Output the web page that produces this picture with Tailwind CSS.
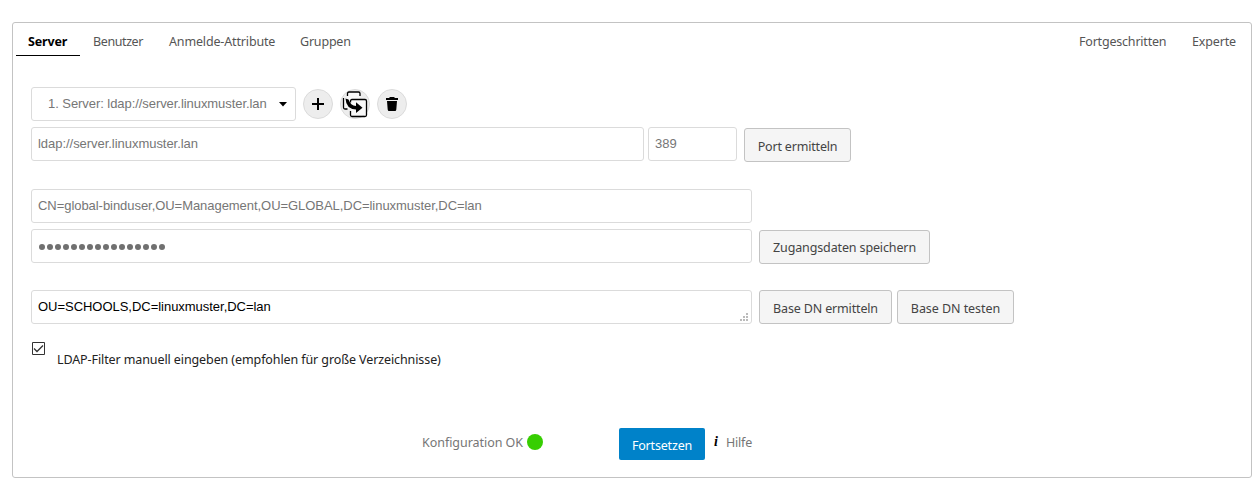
<!DOCTYPE html>
<html lang="de">
<head>
<meta charset="utf-8">
<title>LDAP</title>
<script src="https://cdn.jsdelivr.net/npm/@tailwindcss/browser@4"></script>
</head>
<body class="bg-white font-['Noto_Sans','Open_Sans',sans-serif] text-[12.5px] whitespace-nowrap">
<main class="ml-3 mt-[22px] h-[456px] w-[1240px] rounded-[3px] border border-[#c3c3c3]">
  <nav class="flex h-[33px] pl-[3px] leading-[37px] text-[#555]">
    <a class="w-16 border-b border-black pl-3 font-bold text-black tracking-[-0.15px]">Server</a>
    <a class="ml-[13px] w-[76px] tracking-[-0.4px]">Benutzer</a>
    <a class="w-[131px] tracking-[-0.15px]">Anmelde-Attribute</a>
    <a class="tracking-[-0.2px]">Gruppen</a>
    <a class="ml-auto w-[113px] tracking-[-0.2px]">Fortgeschritten</a>
    <a class="w-[59px] tracking-[-0.15px]">Experte</a>
  </nav>
  <section class="pl-[18px] pt-[31px] font-['Liberation_Sans',Arial,sans-serif] text-[13px] leading-[32px] text-[#767676]">
    <div class="flex h-[34px] items-center">
      <div class="flex h-[34px] w-[265px] items-center rounded-[3px] border border-[#dbdbdb] pl-4">
        <span class="w-[235px] tracking-[-0.06px]">1. Server: ldap://server.linuxmuster.lan</span>
        <svg class="-ml-[4px]" width="8" height="5" viewBox="0 0 8 5"><path d="M0 0h8L4 4.5z" fill="#000"/></svg>
      </div>
      <button class="ml-[7px] flex size-[30px] items-center justify-center rounded-full border border-[#dbdbdb] bg-[#ededed]"><svg width="12" height="12" viewBox="0 0 12 12"><path d="M6 0v12M0 6h12" stroke="#000" stroke-width="2"/></svg></button>
      <button class="ml-[7px] flex size-[30px] items-center justify-center rounded-full border border-[#dbdbdb] bg-[#ededed]">
        <svg class="shrink-0" width="26" height="28" viewBox="0 0 26 28">
          <path d="M1 8h4V2h13v7h6.500v16H9v-6H1z" fill="#f8f8f8"/>
          <path d="M5.500 6V3.500Q5.500 2 7 2h9.500Q18 2 18 3.500V6M1.500 8v9.500q0 1.500 1.500 1.500h2.500" fill="none" stroke="#000" stroke-width="1.300"/>
          <path d="M8.500 21v4q0 1.500 1.500 1.500h13q1.500 0 1.500-1.500V11q0-1.500-1.500-1.500H10q-1.500 0-1.500 1.500v1.500" fill="none" stroke="#000" stroke-width="1.300"/>
          <path d="M3.500 8.500Q4 19 14 19.500V23l6.500-5.300L14 12.300V16Q8.500 15.500 6.500 9.500z" fill="#000"/>
        </svg>
      </button>
      <button class="ml-[7px] flex size-[30px] items-center justify-center rounded-full border border-[#dbdbdb] bg-[#ededed]"><svg width="12" height="14" viewBox="0 0 12 14"><path d="M4 0h4l1 1h3v2H0V1h3zM1 4h10l-.7 8.500Q10.200 14 9 14H3q-1.200 0-1.300-1.500z" fill="#000"/></svg></button>
    </div>
    <div class="mt-[6px] flex h-[34px]">
      <div class="w-[613px] rounded-[3px] border border-[#dbdbdb] pl-[6px] tracking-[-0.04px]">ldap://server.linuxmuster.lan</div>
      <div class="ml-1 w-[89px] rounded-[3px] border border-[#dbdbdb] pl-[6px]">389</div>
      <button class="ml-[7px] mt-px h-[34px] w-[107px] rounded-[3px] border border-[#c3c3c3] bg-[#f5f5f5] pt-[2px] font-['Noto_Sans',sans-serif] text-[12.5px] leading-[27px] tracking-[-0.18px] text-[#444]">Port ermitteln</button>
    </div>
    <div class="mt-[28px] h-[34px] w-[721px] rounded-[3px] border border-[#dbdbdb] pl-[6px] tracking-[-0.05px]">CN=global-binduser,OU=Management,OU=GLOBAL,DC=linuxmuster,DC=lan</div>
    <div class="mt-[6px] flex h-[34px]">
      <div class="flex w-[721px] items-center rounded-[3px] border border-[#dbdbdb] pl-[7px] pt-px"><svg width="130" height="6" viewBox="0 0 130 6"><path d="M3 3h121" stroke="#707070" stroke-width="6" stroke-linecap="round" stroke-dasharray="0 8"/></svg></div>
      <button class="ml-[7px] mt-px h-[34px] w-[171px] rounded-[3px] border border-[#c3c3c3] bg-[#f5f5f5] font-['Noto_Sans',sans-serif] text-[12.5px] leading-[25px] tracking-[-0.13px] text-[#444]">Zugangsdaten speichern</button>
    </div>
    <div class="mt-[27px] flex h-[34px]">
      <div class="flex w-[721px] items-end justify-between rounded-[3px] border border-[#dbdbdb] pl-[6px] text-black"><span class="tracking-[-0.03px]">OU=SCHOOLS,DC=linuxmuster,DC=lan</span><svg class="mb-[2px] mr-[3px]" width="8" height="8" viewBox="0 0 8 8" fill="#bbb"><path d="M6 0h2v2H6zM3 3h2v2H3zM6 3h2v2H6zM0 6h2v2H0zM3 6h2v2H3zM6 6h2v2H6z"/></svg></div>
      <button class="ml-[7px] w-[133px] rounded-[3px] border border-[#c3c3c3] bg-[#f5f5f5] pt-[2px] font-['Noto_Sans',sans-serif] text-[12.5px] leading-[27px] tracking-[-0.15px] text-[#444]">Base DN ermitteln</button>
      <button class="ml-[5px] w-[117px] rounded-[3px] border border-[#c3c3c3] bg-[#f5f5f5] pt-[2px] font-['Noto_Sans',sans-serif] text-[12.5px] leading-[27px] tracking-[-0.06px] text-[#444]">Base DN testen</button>
    </div>
  </section>
  <label class="mt-[18px] flex pl-[19px]">
    <svg width="13" height="13" viewBox="0 0 13 13" fill="none"><path d="M.5.5h12v12H.5z" stroke="#333"/><path d="M2 6.500l3 3 6-6" stroke="#333" stroke-width="1.300"/></svg>
    <span class="ml-3 mt-2 leading-5 tracking-[-0.1px] text-[#222]">LDAP-Filter manuell eingeben (empfohlen für große Verzeichnisse)</span>
  </label>
  <footer class="mt-[58px] flex h-8 pl-[409px] leading-[30px] text-[#767676]">
    <span class="w-[105px] tracking-[-0.04px]">Konfiguration OK</span>
    <span class="mt-[6px] size-4 rounded-full bg-[#37ce02]"></span>
    <button class="ml-[76px] h-8 w-[86px] rounded-[2px] bg-[#0082c9] pt-[3px] leading-[29px] tracking-[-0.18px] text-white">Fortsetzen</button>
    <span class="ml-[9px] w-3 font-['Liberation_Serif',serif] text-[14px] font-bold italic leading-[27px] text-black">i</span>
    <span class="tracking-[-0.2px]">Hilfe</span>
  </footer>
</main>
</body>
</html>
